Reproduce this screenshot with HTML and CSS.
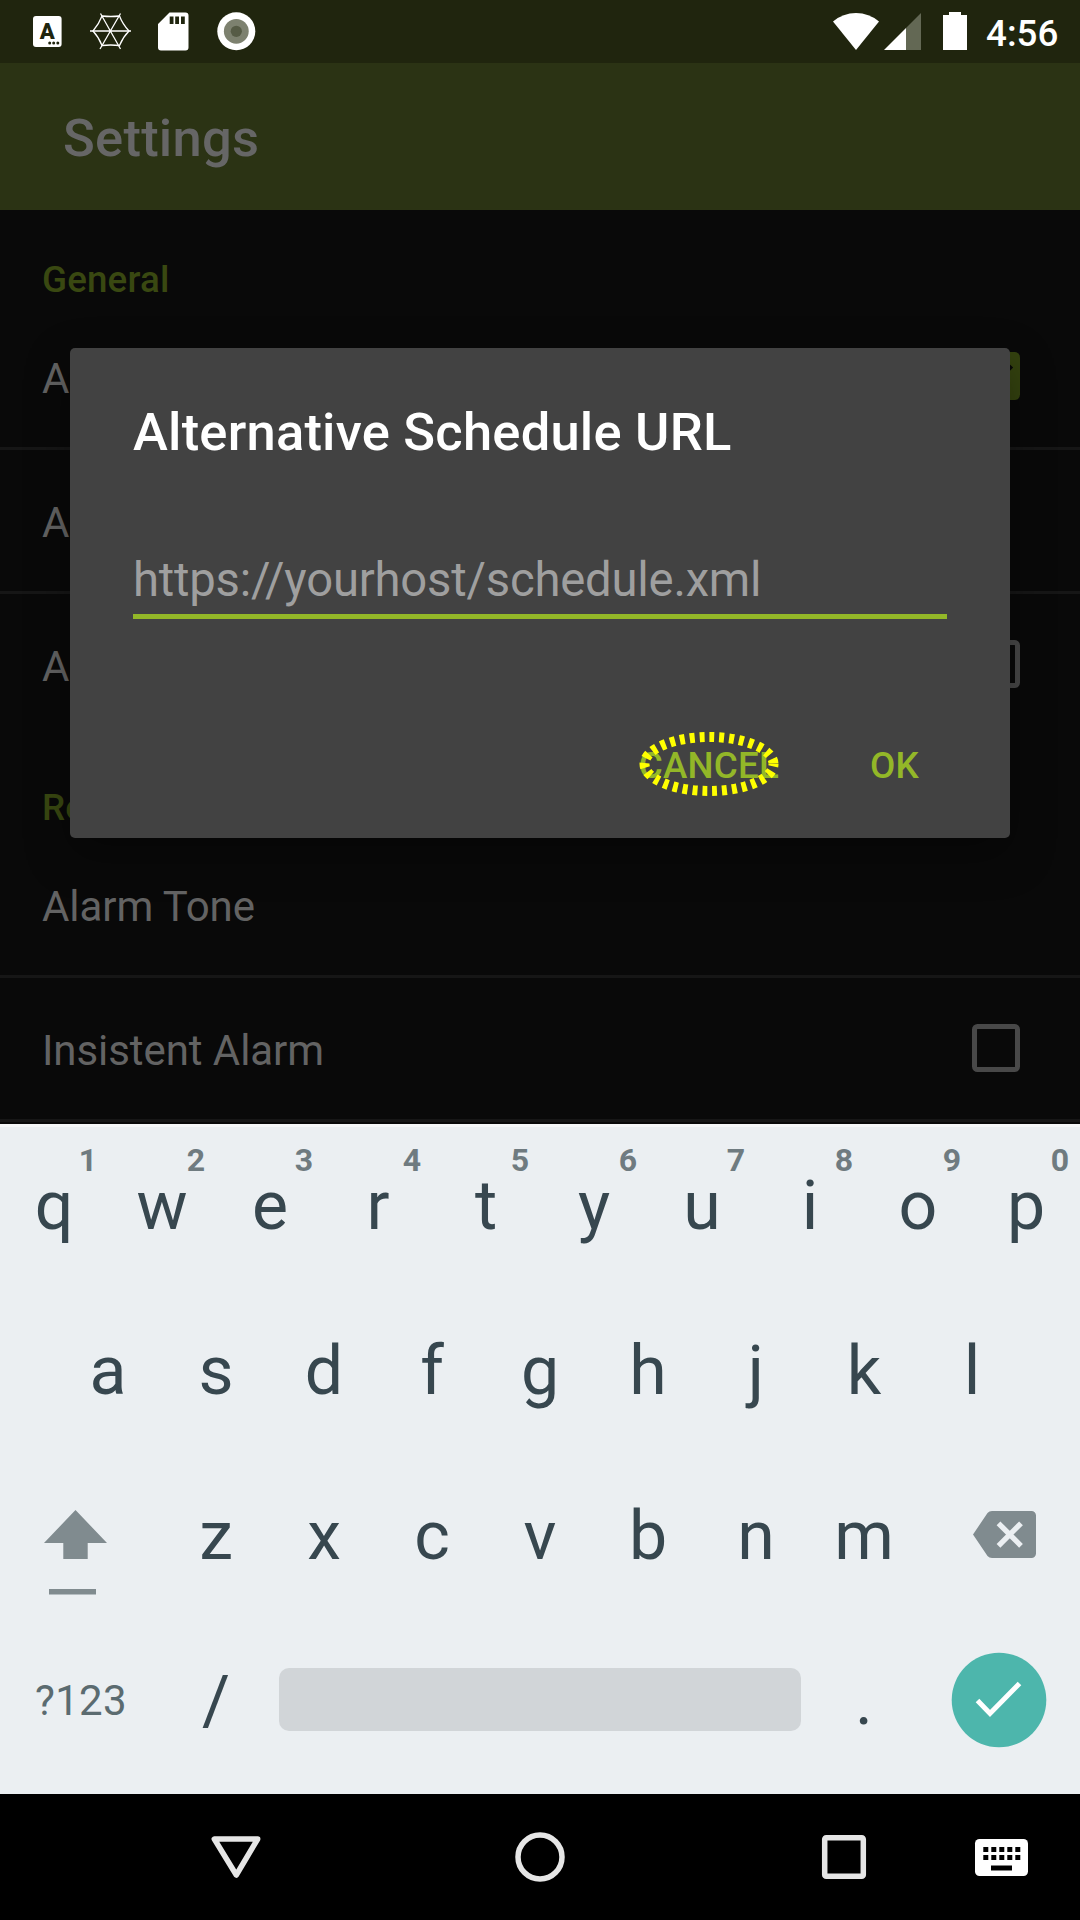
FILE: index.html
```html
<!DOCTYPE html>
<html lang="en">
<head>
<meta charset="utf-8">
<title>Settings</title>
<link rel="stylesheet" href="styles.css">
</head>
<body>
<div class="screen">
  <header class="status">
    <svg class="note" viewBox="16 0 63 63"><rect x="33" y="16" width="28.6" height="31" rx="3" fill="#fff"/><text class="badge-a" x="47.3" y="38.5" text-anchor="middle">A</text><g fill="#20250e"><circle cx="49.7" cy="43" r="1.5"/><circle cx="53.7" cy="43" r="1.5"/><circle cx="57.8" cy="43" r="1.5"/></g></svg>
    <svg class="note" viewBox="79 0 63 63" fill="none" stroke="#fff" stroke-width="1.3"><path d="M90 31h41M100.500 13.500L120.500 49M120.500 13.500L100 49"/><path d="M102 16q9 1 17.500 0q3 8 9.500 15q-6 6-9.500 14.500q-9-1-17.500 0q-3-8-9-14.500q6-7 9-15z"/></svg>
    <svg class="note" viewBox="142 0 63 63"><path fill="#fff" fill-rule="evenodd" d="M169.500 12.500H185.500a3 3 0 0 1 3 3V47.500a3 3 0 0 1-3 3H161a3 3 0 0 1-3-3V24zM169.700 16.500v7.500h3.800v-7.500zM175.200 16.500v7.500h3.800v-7.500zM181 16.500v7.500h3.800v-7.500z"/></svg>
    <svg class="note" viewBox="205 0 63 63"><circle cx="236.300" cy="31.300" r="19" fill="#fff"/><circle cx="236.300" cy="31.300" r="12.400" fill="#7d816f"/><circle cx="236.300" cy="31.300" r="5.600" fill="#565b45"/></svg>
    <svg class="signals" viewBox="826 0 154 63"><path fill="#fff" d="M856 50L833 21.500Q843 13 856 13T879 21.500z"/><path fill="#636854" d="M906 28L921 13V50H906z"/><path fill="#fff" d="M884 50L906 28V50zM943 15h6v-3h12v3h6v35h-24z"/></svg>
    <span class="clock">4:56</span>
  </header>
  <div class="toolbar">Settings</div>
  <main class="prefs">
    <h2 class="category">General</h2>
    <div class="pref"><span>Automatic Updates</span><svg class="check" viewBox="0 0 48 48"><rect width="48" height="48" rx="5.500" fill="#34420f"/><path d="M7 24L18 35L39 13.500" fill="none" stroke="#080808" stroke-width="6"/></svg></div>
    <div class="pref"><span>Alternative Schedule URL</span></div>
    <div class="pref last"><span>Alternative Highlighting</span><i class="box"></i></div>
    <h2 class="category">Reminders</h2>
    <div class="pref"><span>Alarm Tone</span></div>
    <div class="pref"><span>Insistent Alarm</span><i class="box"></i></div>
  </main>

  <section class="dialog">
    <h1 class="title">Alternative Schedule URL</h1>
    <div class="field">https://yourhost/schedule.xml</div>
    <div class="actions">
      <span class="action cancel">CANCEL<svg class="ring" viewBox="0 0 140 66"><ellipse cx="70" cy="33" rx="64.500" ry="27" fill="none" stroke="#ff0" stroke-width="10" stroke-dasharray="4.940 4.940" stroke-dashoffset="2.500"/></svg></span>
      <span class="action">OK</span>
    </div>
  </section>

  <section class="keyboard">
    <div class="keys">
      <span class="key">q<b>1</b></span><span class="key">w<b>2</b></span><span class="key">e<b>3</b></span><span class="key">r<b>4</b></span><span class="key">t<b>5</b></span><span class="key">y<b>6</b></span><span class="key">u<b>7</b></span><span class="key">i<b>8</b></span><span class="key">o<b>9</b></span><span class="key">p<b>0</b></span>
    </div>
    <div class="keys">
      <span class="key">a</span><span class="key">s</span><span class="key">d</span><span class="key">f</span><span class="key">g</span><span class="key">h</span><span class="key">j</span><span class="key">k</span><span class="key">l</span>
    </div>
    <div class="keys">
      <svg class="wide" viewBox="0 1457 162 165" fill="#808b8f"><path d="M75.500 1510L107 1543H87.700V1559H63.300V1543H44zM49 1589h47v5.500H49z"/></svg>
      <span class="key">z</span><span class="key">x</span><span class="key">c</span><span class="key">v</span><span class="key">b</span><span class="key">n</span><span class="key">m</span>
      <svg class="wide" viewBox="918 1457 162 165"><path fill="#808b8f" d="M992 1511H1031.500a4.500 4.500 0 0 1 4.500 4.500V1553.500a4.500 4.500 0 0 1-4.500 4.500H992a6 6 0 0 1-4.500-2L973 1534.500L987.500 1513a6 6 0 0 1 4.500-2z"/><path stroke="#ebeff2" stroke-width="5.300" d="M998.500 1523.300L1021 1545.800M1021 1523.300L998.500 1545.800"/></svg>
    </div>
    <div class="keys">
      <span class="symbols">?123</span>
      <span class="key">/</span>
      <span class="space"></span>
      <span class="key">.</span>
      <svg class="wide" viewBox="918 1622 162 165"><circle cx="999" cy="1700" r="47.300" fill="#4db6ac"/><path fill="none" stroke="#fff" stroke-width="5" d="M977.500 1700.500L990 1713.500L1019.500 1683.500"/></svg>
    </div>
  </section>

  <nav class="nav">
    <svg viewBox="0 1794 1080 126" fill="none" stroke="#e6e6e6" stroke-width="5.500"><path stroke-linejoin="round" d="M214.300 1839H257.700L236.300 1875z"/><circle cx="540" cy="1857" r="22"/><rect x="824.700" y="1837.700" width="38.600" height="38.600" rx="1.500"/><rect x="975" y="1839" width="53" height="37" rx="4.500" fill="#fff" stroke="none"/><path stroke="#000" stroke-width="5" stroke-dasharray="5 3" d="M983.300 1849.500h38M983.300 1857.500h38"/><path stroke="#000" stroke-width="5" d="M991 1868h21"/></svg>
  </nav>
</div>
</body>
</html>
```
FILE: styles.css
```css
* { box-sizing: border-box; }
body { margin: 0; background: #000; font-family: Roboto, sans-serif; }
svg { display: block; flex: none; }
.screen { position: relative; width: 1080px; height: 1920px; overflow: hidden; display: flex; flex-direction: column; }

.status { flex: none; height: 63px; background: #20250e; display: flex; padding-left: 16px; }
.note { width: 63px; height: 63px; }
.badge-a { font-family: Roboto, sans-serif; font-weight: 900; font-size: 22px; fill: #20250e; }
.signals { width: 154px; height: 63px; margin-left: 558px; }
.clock { margin-left: 6px; font-size: 36.75px; font-weight: 500; line-height: 67px; color: #fff; }

.toolbar { flex: none; height: 147px; padding-left: 63px; background: #2b3314; color: #666; font-size: 52.5px; font-weight: 500; line-height: 151px; letter-spacing: .25px; }

.prefs { flex: none; height: 914px; background: #090909; overflow: hidden; }
.category { margin: 0; height: 96px; padding: 48px 42px 0; color: #394811; font-size: 36.75px; font-weight: 500; line-height: 43px; letter-spacing: .15px; }
.pref { height: 144px; padding: 0 60px 0 42px; border-bottom: 3px solid #161616; display: flex; justify-content: space-between; color: #636363; font-size: 42px; line-height: 145px; letter-spacing: -.07px; white-space: nowrap; }
.pref.last { border-color: transparent; }
.check { width: 48px; height: 48px; margin-top: 46px; }
.box { width: 48px; height: 48px; margin-top: 46px; border: 5px solid #484848; border-radius: 5.5px; }

.dialog { position: absolute; left: 70px; top: 348px; width: 940px; height: 490px; padding: 52px 63px 0; border-radius: 5px; background: #424242; box-shadow: 0 16px 44px rgba(0,0,0,.35); }
.title { margin: 0; height: 64px; color: #fff; font-size: 52.5px; font-weight: 500; line-height: 65px; letter-spacing: .22px; white-space: nowrap; }
.field { margin-top: 85px; height: 70px; border-bottom: 5px solid #93b728; color: #9f9f9f; font-size: 47.25px; line-height: 63px; letter-spacing: -.22px; white-space: nowrap; }
.actions { display: flex; justify-content: flex-end; gap: 91px; padding-right: 28px; margin-top: 116px; }
.action { position: relative; color: #93b728; font-size: 36.75px; font-weight: 500; line-height: 62px; letter-spacing: .2px; }
.ring { position: absolute; left: 0; top: -4px; width: 140px; height: 66px; }

.keyboard { flex: none; height: 670px; border-top: 3px solid #f5f7f8; background: #ebeff2; }
.keys { height: 165px; display: flex; justify-content: center; }
.key { position: relative; width: 108px; text-align: center; color: #37474f; font-size: 68px; line-height: 158px; }
.key b { position: absolute; right: 11px; top: 14px; font-size: 32px; font-weight: 700; line-height: 38px; color: #6f7b80; }
.wide { width: 162px; height: 165px; }
.symbols { width: 162px; padding-left: 35px; color: #5b6b70; font-size: 42px; line-height: 158px; letter-spacing: .3px; }
.space { width: 522px; height: 63px; margin: 46px 9px 0; border-radius: 10px; background: #d1d5d8; }

.nav { flex: none; height: 126px; background: #000; }
.nav svg { width: 1080px; height: 126px; }
```
